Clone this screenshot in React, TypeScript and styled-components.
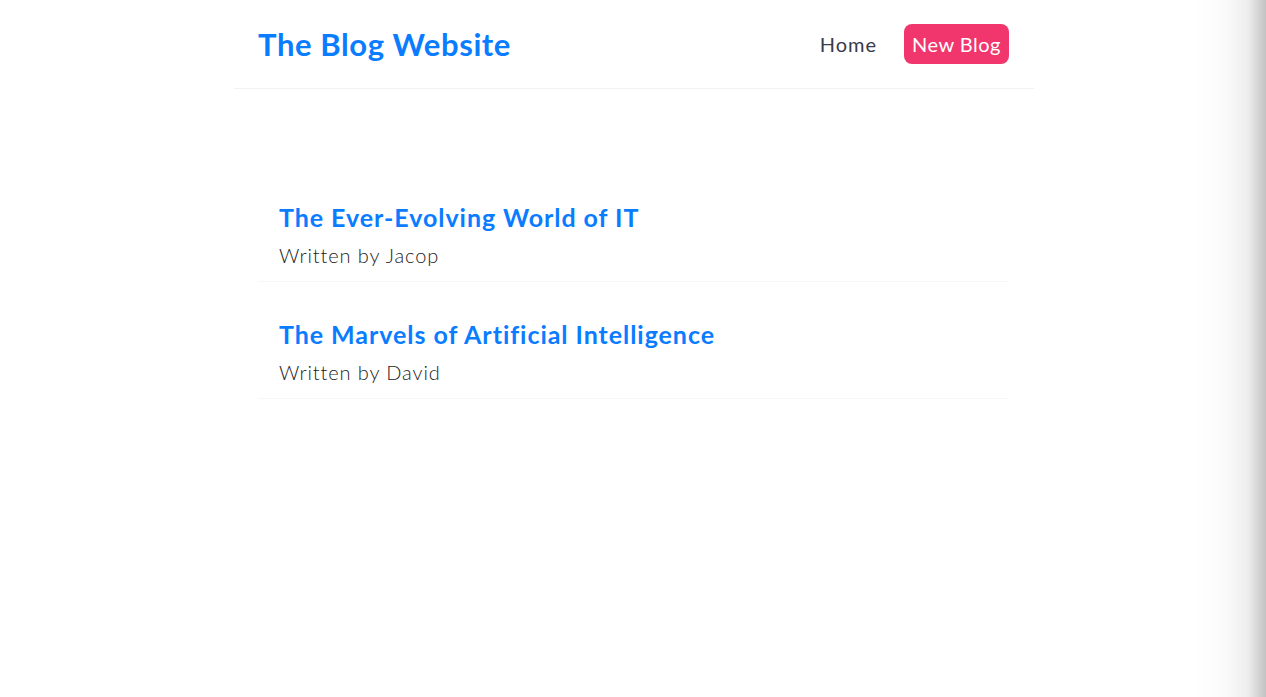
import React from "react";
import styled, { createGlobalStyle } from "styled-components";

const GlobalStyle = createGlobalStyle`
  * {
    margin: 0;
    box-sizing: border-box;
  }
  body {
    font-family: "Lato", "Open Sans", sans-serif;
    color: #333;
    background: #fff;
  }
`;

const Page = styled.div`
  max-width: 800px;
  margin: 0 auto;
  position: relative;
  left: 1px;
`;

const Navbar = styled.nav`
  display: flex;
  align-items: center;
  padding: 20px 25px 20px 24px;
  border-bottom: 1px solid #f2f2f2;

  h1 {
    color: #0a7cff;
    font-size: 31px;
    font-weight: 700;
    line-height: 48px;
    letter-spacing: 0.6px;
  }
`;

const Links = styled.div`
  margin-left: auto;
  display: flex;
  align-items: center;
  gap: 19px;
`;

const NavLink = styled.a<{ primary?: boolean }>`
  text-decoration: none;
  font-size: 20px;
  line-height: 24px;
  letter-spacing: ${({ primary }) => (primary ? "0.5px" : "1px")};
  padding: 8px 8px;
  border-radius: 8px;
  color: ${({ primary }) => (primary ? "#fff" : "#3a3a4a")};
  background: ${({ primary }) => (primary ? "#f1356d" : "transparent")};
  cursor: pointer;
`;

const Content = styled.div`
  padding: 76px 25px 0 24px;
`;

const BlogPreview = styled.div`
  padding: 10px 20px 14px 21px;
  margin: 28px 0;
  border-bottom: 1px solid #f7f7f7;

  h2 {
    color: #0a7cff;
    font-size: 25px;
    font-weight: 700;
    line-height: 29px;
    margin-bottom: 11px;
    letter-spacing: 0.95px;
  }

  p {
    font-size: 20px;
    line-height: 24px;
    font-weight: 300;
    letter-spacing: 0.9px;
    color: #222;
  }
`;

const EdgeShade = styled.div`
  position: fixed;
  top: 0;
  right: 0;
  width: 72px;
  height: 100vh;
  pointer-events: none;
  background: linear-gradient(
    to right,
    rgba(0, 0, 0, 0) 0%,
    rgba(0, 0, 0, 0.02) 45%,
    rgba(0, 0, 0, 0.07) 75%,
    rgba(0, 0, 0, 0.24) 100%
  );
`;

const blogs = [
  { id: 1, title: "The Ever-Evolving World of IT", author: "Jacop" },
  { id: 2, title: "The Marvels of Artificial Intelligence", author: "David" },
];

export default function App() {
  return (
    <>
      <GlobalStyle />
      <Page>
        <Navbar>
          <h1>The Blog Website</h1>
          <Links>
            <NavLink href="#">Home</NavLink>
            <NavLink href="#" primary>
              New Blog
            </NavLink>
          </Links>
        </Navbar>
        <Content>
          {blogs.map((blog) => (
            <BlogPreview key={blog.id}>
              <h2>{blog.title}</h2>
              <p>Written by {blog.author}</p>
            </BlogPreview>
          ))}
        </Content>
      </Page>
      <EdgeShade />
    </>
  );
}
